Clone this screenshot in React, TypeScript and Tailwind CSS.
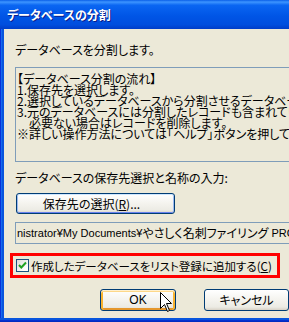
import React from "react";

const jp = "font-['Noto_Sans_CJK_JP',sans-serif] [font-feature-settings:'palt']";

export default function App() {
  return (
    <div className={`relative w-[289px] h-[322px] overflow-hidden flex flex-col bg-[#ECE9D8] text-black ${jp}`}>
      {/* title bar */}
      <div className="h-[29px] shrink-0 flex items-center pl-[7px] pt-[1px] bg-[linear-gradient(to_bottom,#0A5FE8_0%,#3D95FF_7%,#0A66F2_18%,#0055E6_55%,#004EDE_85%,#003DC8_100%)]">
        <span className="font-['Noto_Sans_CJK_JP',sans-serif] text-[12px] font-bold leading-[14px] text-white [text-shadow:1px_1px_0_#0A1E8C]">
          データベースの分割
        </span>
      </div>

      <div className="flex flex-1 min-h-0">
        {/* left frame */}
        <div className="w-[4px] shrink-0 bg-[linear-gradient(to_right,#0831D9_0%,#0831D9_25%,#166AEE_25%,#166AEE_50%,#0855DD_50%,#0855DD_100%)]" />

        {/* content */}
        <div className="flex-1 min-w-0 flex flex-col bg-[#ECE9D8]">
          <div className="ml-[11px] mt-[15px] text-[12px] leading-[12px] whitespace-nowrap">
            データベースを分割します。
          </div>

          <div className="ml-[11px] mt-[11px] w-[300px] h-[95px] border border-[#7F9DB9] bg-[#ECE9D8] pt-[5px] pl-[1px] text-[12px] leading-[11px] whitespace-nowrap overflow-hidden">
            <div>【データベース分割の流れ】</div>
            <div>1.保存先を選択します。</div>
            <div>2.選択しているデータベースから分割させるデータベースを選択します。</div>
            <div>3.元のデータベースには分割したレコードも含まれています。</div>
            <div>　必要ない場合はレコードを削除します。</div>
            <div>※詳しい操作方法については「ヘルプ」ボタンを押してください。</div>
          </div>

          <div className="ml-[11px] mt-[10px] text-[12px] leading-[12px] whitespace-nowrap">
            データベースの保存先選択と名称の入力:
          </div>

          <div className="ml-[12px] mt-[9px] w-[159px] h-[21px] rounded-[3px] border border-[#003C74] bg-[linear-gradient(to_bottom,#FFFFFF_0%,#F4F3EE_50%,#ECEBE4_85%,#D8D2C6_100%)] shadow-[inset_0_1px_0_#CEE7FF,inset_1px_0_0_#9DBAF0,inset_-1px_0_0_#9DBAF0,inset_0_-1px_0_#6982EE] flex items-center justify-center pr-[8px] text-[12px] leading-[12px] whitespace-nowrap">
            保存先の選択(<span className="underline">R</span>)...
          </div>

          <div className="ml-[11px] mt-[8px] w-[300px] h-[22px] border border-[#7F9DB9] bg-[#ECE9D8] flex items-center pl-[1px] whitespace-nowrap overflow-hidden leading-[12px]">
            <span className="font-['Liberation_Sans',sans-serif] text-[11px]">nistrator¥My Documents¥</span>
            <span className="text-[12px]">やさしく名刺ファイリング</span>
            <span className="font-['Liberation_Sans',sans-serif] text-[11px]">&nbsp;PRO¥Data</span>
          </div>

          <div className="ml-[6px] mt-[9px] w-[270px] h-[25px] border-[3px] border-[#FF0000] flex items-center pl-[3px]">
            <div className="w-[13px] h-[13px] shrink-0 border border-[#1C5180] bg-[linear-gradient(135deg,#DCDCD7_0%,#FFFFFF_80%)] flex items-center justify-center">
              <svg width="11" height="11" viewBox="0 0 11 11">
                <path d="M2 5 L4.3 7.5 L9 2.5" fill="none" stroke="#21A121" strokeWidth="2" />
              </svg>
            </div>
            <span className="ml-[2px] text-[11.5px] leading-[12px] whitespace-nowrap">
              作成したデータベースをリスト登録に追加する(<span className="underline">C</span>)
            </span>
          </div>

          <div className="mt-[11px] flex">
            <div className="ml-[96px] w-[84px] h-[22px] rounded-[3px] border border-[#003C74] bg-[linear-gradient(to_bottom,#FFFFFF_0%,#F4F3EE_50%,#ECEBE4_85%,#D8D2C6_100%)] shadow-[inset_0_1px_0_#FFF0CF,inset_0_2px_0_#FDD889,inset_2px_0_0_#F8B330,inset_-2px_0_0_#F8B330,inset_0_-2px_0_#E5972D] flex items-center justify-center font-['Liberation_Sans',sans-serif] text-[12px] leading-[12px]">
              OK
            </div>
            <div className="ml-[28px] w-[85px] h-[22px] shrink-0 rounded-[3px] border border-[#003C74] bg-[linear-gradient(to_bottom,#FFFFFF_0%,#F4F3EE_50%,#ECEBE4_85%,#D8D2C6_100%)] flex items-center justify-center text-[12px] leading-[12px] whitespace-nowrap">
              キャンセル
            </div>
          </div>
        </div>
      </div>

      {/* bottom frame */}
      <div className="h-[4px] shrink-0 bg-[linear-gradient(to_bottom,#0855DD_0%,#0855DD_50%,#0831D9_50%,#002AB8_100%)]" />

      {/* mouse cursor */}
      <svg className="absolute left-[160px] top-[292px]" width="13" height="21" viewBox="0 0 13 21">
        <polygon
          points="0.5,0.5 0.5,16.5 4.5,12.5 7.5,19.5 9.5,18.5 6.5,11.5 11.5,11.5"
          fill="#FFFFFF"
          stroke="#000000"
          strokeWidth="1"
        />
      </svg>
    </div>
  );
}
